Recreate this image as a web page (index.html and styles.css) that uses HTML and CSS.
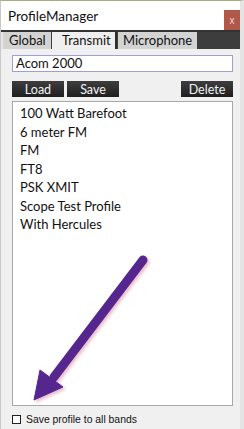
FILE: index.html
```html
<!DOCTYPE html>
<html lang="en">
<head>
    <meta charset="UTF-8">
    <title>ProfileManager</title>
    <link rel="stylesheet" href="styles.css">
</head>
<body>
    <div class="window">
        <div class="titlebar">
            <span class="title">ProfileManager</span>
            <span class="close">x</span>
        </div>

        <div class="tabs">
            <div class="tab">Global</div>
            <div class="tab active">Transmit</div>
            <div class="tab">Microphone</div>
        </div>

        <div class="panel">
            <div class="name-box">Acom 2000</div>

            <div class="buttons">
                <button>Load</button>
                <button>Save</button>
                <span class="spacer"></span>
                <button>Delete</button>
            </div>

            <ul class="profiles">
                <li>100 Watt Barefoot</li>
                <li>6 meter FM</li>
                <li>FM</li>
                <li>FT8</li>
                <li>PSK XMIT</li>
                <li>Scope Test Profile</li>
                <li>With Hercules</li>
            </ul>

            <label class="all-bands">
                <span class="check"></span>
                Save profile to all bands
            </label>
        </div>

        <!-- callout arrow drawn over the list -->
        <svg class="arrow" width="244" height="429" viewBox="0 0 244 429">
            <defs>
                <filter id="shadow" x="-20%" y="-20%" width="140%" height="140%">
                    <feDropShadow dx="2" dy="2" stdDeviation="1.5" flood-color="#c04070" flood-opacity="0.35"/>
                </filter>
            </defs>
            <g filter="url(#shadow)" fill="#56278f" stroke="#56278f">
                <line x1="143" y1="260" x2="54" y2="377" stroke-width="9" stroke-linecap="round"/>
                <polygon points="34,400 40,370 63,387" stroke-width="1" stroke-linejoin="round"/>
            </g>
        </svg>
    </div>
</body>
</html>
```

FILE: styles.css
```css
* {
    box-sizing: border-box;
    margin: 0;
    padding: 0;
}

body {
    width: 244px;
    height: 429px;
    overflow: hidden;
    font-family: Lato, "Open Sans", sans-serif;
    background: #f0f0f0;
}

.window {
    position: relative;
    height: 429px;
    display: flex;
    flex-direction: column;
    border-top: 1px solid #a8ae82;
    border-left: 1px solid #c8c8c8;
    border-right: 4px solid #e4e4e4;
}

.titlebar {
    height: 29px;
    background: #fff;
    display: flex;
    align-items: center;
    justify-content: space-between;
    padding-left: 7px;
}

.title {
    font-size: 13.5px;
    color: #111;
}

.close {
    width: 16px;
    height: 20px;
    margin-top: 9px;
    background: #b0584a;
    color: #f3d8d4;
    font-size: 10px;
    display: flex;
    align-items: center;
    justify-content: center;
    font-family: "Liberation Sans", sans-serif;
}

.tabs {
    display: flex;
    height: 19px;
    background: #3d3d3d;
    border-top: 2px solid #333;
    padding-left: 2px;
    box-shadow: inset 2px 0 0 #e6e6e6;
}

.tab {
    font-size: 13px;
    line-height: 17px;
    padding: 0 6px;
    background: #d3d3d3;
    color: #111;
    margin-right: 1px;
}

.tab:first-child {
    width: 48px;
}

.tab.active {
    background: #efefef;
    width: 65px;
    padding-left: 10px;
    border-right: 2px solid #2e2e2e;
}

.tab:last-child {
    width: 79px;
    padding-left: 5px;
}

.panel {
    flex: 1;
    display: flex;
    flex-direction: column;
    padding: 6px 5px 0 11px;
    background: #f0f0f0;
}

.name-box {
    height: 17px;
    width: 221px;
    border: 1px solid #9f9fd6;
    background: #fff;
    font-size: 13px;
    line-height: 15px;
    padding-left: 3px;
    color: #111;
}

.buttons {
    display: flex;
    gap: 3px;
    margin-top: 9px;
    width: 221px;
}

.spacer {
    flex: 1;
}

button {
    width: 52px;
    height: 16px;
    border: none;
    background: linear-gradient(#3e3e3e, #1f1f1f);
    color: #f2f2f2;
    font-family: Lato, "Open Sans", sans-serif;
    font-size: 12.5px;
    line-height: 15px;
}

.profiles {
    list-style: none;
    margin-top: 4px;
    width: 221px;
    height: 305px;
    background: #fff;
    border: 1px solid #a8a8a8;
    padding: 2px 0 0 7px;
}

.profiles li {
    font-size: 13px;
    line-height: 18.5px;
    color: #111;
}

.all-bands {
    display: flex;
    align-items: center;
    gap: 5px;
    margin-top: 8px;
    font-family: "Liberation Sans", Arial, sans-serif;
    font-size: 10.4px;
    color: #111;
}

.check {
    width: 9px;
    height: 9px;
    border: 1px solid #222;
    background: #fff;
}

.arrow {
    position: absolute;
    top: -1px;
    left: -1px;
    pointer-events: none;
}
```
